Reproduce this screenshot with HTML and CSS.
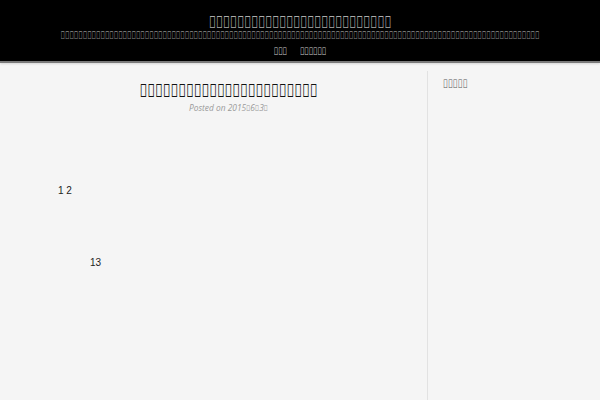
FILE: index.html
```html
<!DOCTYPE html>
<html lang="ja">
<head>
<meta charset="utf-8">
<title>Site</title>
<link rel="stylesheet" href="styles.css">
</head>
<body>
<header class="site-header">
  <h1 class="site-title"><span class="tofu">&#xE000;&#xE000;&#xE000;&#xE000;&#xE000;&#xE000;&#xE000;&#xE000;&#xE000;&#xE000;&#xE000;&#xE000;&#xE000;&#xE000;&#xE000;&#xE000;&#xE000;&#xE000;&#xE000;&#xE000;&#xE000;&#xE000;&#xE000;&#xE000;&#xE000;&#xE000;</span></h1>
  <p class="site-desc"><span class="tofu">&#xE000;&#xE000;&#xE000;&#xE000;&#xE000;&#xE000;&#xE000;&#xE000;&#xE000;&#xE000;&#xE000;&#xE000;&#xE000;&#xE000;&#xE000;&#xE000;&#xE000;&#xE000;&#xE000;&#xE000;&#xE000;&#xE000;&#xE000;&#xE000;&#xE000;&#xE000;&#xE000;&#xE000;&#xE000;&#xE000;&#xE000;&#xE000;&#xE000;&#xE000;&#xE000;&#xE000;&#xE000;&#xE000;&#xE000;&#xE000;&#xE000;&#xE000;&#xE000;&#xE000;&#xE000;&#xE000;&#xE000;&#xE000;&#xE000;&#xE000;&#xE000;&#xE000;&#xE000;&#xE000;&#xE000;&#xE000;&#xE000;&#xE000;&#xE000;&#xE000;&#xE000;&#xE000;&#xE000;&#xE000;&#xE000;&#xE000;&#xE000;&#xE000;&#xE000;&#xE000;&#xE000;&#xE000;&#xE000;&#xE000;&#xE000;&#xE000;&#xE000;&#xE000;&#xE000;&#xE000;&#xE000;&#xE000;&#xE000;&#xE000;&#xE000;&#xE000;&#xE000;&#xE000;&#xE000;&#xE000;&#xE000;&#xE000;&#xE000;&#xE000;&#xE000;&#xE000;&#xE000;&#xE000;&#xE000;&#xE000;&#xE000;&#xE000;&#xE000;&#xE000;&#xE000;&#xE000;&#xE000;&#xE000;</span></p>
  <nav class="main-nav">
    <a class="nav-item" href="#"><span class="tofu">&#xE000;&#xE000;&#xE000;</span></a>
    <a class="nav-item" href="#"><span class="tofu">&#xE000;&#xE000;&#xE000;&#xE000;&#xE000;&#xE000;</span></a>
  </nav>
</header>
<div class="site-content">
  <main class="main">
    <article class="entry">
      <h2 class="entry-title"><span class="tofu title-tofu">&#xE000;&#xE000;&#xE000;&#xE000;&#xE000;&#xE000;&#xE000;&#xE000;&#xE000;&#xE000;&#xE000;&#xE000;&#xE000;&#xE000;&#xE000;&#xE000;&#xE000;&#xE000;&#xE000;&#xE000;&#xE000;&#xE000;&#xE000;</span></h2>
      <div class="entry-meta">Posted on 2015<span class="tofu-sm">&#xE000;</span>6<span class="tofu-sm">&#xE000;</span>3<span class="tofu-sm">&#xE000;</span></div>
      <div class="entry-body">
        <p class="num">1 2</p>
        <p class="num indent">13</p>
      </div>
    </article>
  </main>
  <aside class="sidebar">
    <h3 class="widget-title"><span class="tofu">&#xE000;&#xE000;&#xE000;&#xE000;&#xE000;</span></h3>
  </aside>
</div>
</body>
</html>
```
FILE: styles.css
```css
* { box-sizing: border-box; }
html, body { margin: 0; padding: 0; }
body {
  background: #f5f5f5;
  font-family: "Noto Sans", "Liberation Sans", sans-serif;
  color: #333;
  height: 400px;
  overflow: hidden;
}
.tofu { display: inline-block; line-height: 1; transform: scaleY(1.45); }
.title-tofu { transform: scaleY(1.4); }
.tofu-sm { display: inline-block; line-height: 1; transform: scaleY(1.15); font-style: normal; }

.site-header {
  background: #000;
  height: 63px;
  padding-top: 14px;
  border-bottom: 2px solid #7a7a7a;
  box-shadow: 0 1px 2px rgba(0,0,0,0.12);
  text-align: center;
}
.site-title {
  margin: 0;
  font-size: 11.7px;
  line-height: 14px;
  font-weight: normal;
  color: #ababab;
}
.site-desc {
  margin: 0;
  font-size: 7.4px;
  line-height: 14px;
  color: #8c8c8c;
}
.main-nav {
  margin-top: 2px;
  display: flex;
  justify-content: center;
  gap: 13px;
  line-height: 15px;
  font-size: 7.3px;
}
.nav-item { color: #d0d0d0; text-decoration: none; }

.site-content { display: flex; }
.main { width: 427px; padding-left: 30px; }
.entry-title {
  margin: 17px 0 0;
  font-size: 13.15px;
  line-height: 20px;
  font-weight: bold;
  color: #111;
  text-align: center;
}
.entry-meta {
  margin-top: 2px;
  font-family: "Open Sans", sans-serif;
  font-style: italic;
  font-size: 8.4px;
  line-height: 12px;
  color: #9a9a9a;
  text-align: center;
}
.entry-meta .tofu-sm { font-family: "Noto Sans", sans-serif; font-size: 7px; }
.entry-body { padding-left: 28px; padding-top: 70px; }
.num {
  margin: 0;
  font-family: "Liberation Sans", Arial, sans-serif;
  font-size: 10px;
  line-height: 14px;
  color: #222;
}
.indent { margin-top: 58px; padding-left: 32px; }

.sidebar {
  flex: 1;
  margin-top: 8px;
  height: 340px;
  border-left: 1px solid #e2e2e2;
  padding: 8px 0 0 15px;
}
.widget-title {
  margin: 0;
  font-size: 8.2px;
  line-height: 10px;
  font-weight: normal;
  color: #555;
}
```
